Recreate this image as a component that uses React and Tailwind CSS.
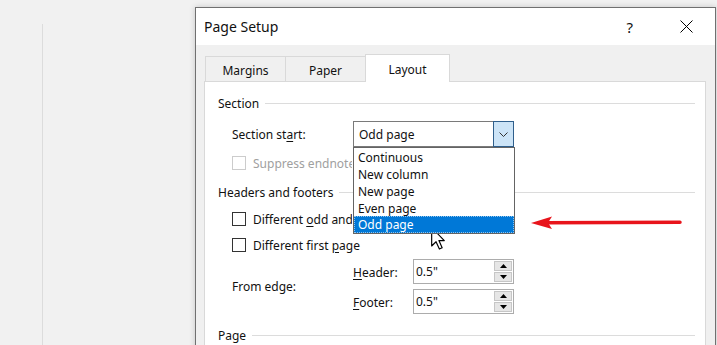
import React from 'react';

const options = ['Continuous', 'New column', 'New page', 'Even page', 'Odd page'];

function Checkbox({ disabled }) {
  return (
    <span
      className={
        disabled
          ? 'w-[14px] h-[14px] shrink-0 border border-[#cccccc] bg-white'
          : 'w-[14px] h-[14px] shrink-0 border border-[#333333] bg-white'
      }
    />
  );
}

function GroupTitle({ label }) {
  return (
    <div className="flex items-center h-[16px] pl-[13px] pr-[10px]">
      <span className="pt-[2px]">{label}</span>
      <div className="flex-1 h-px bg-[#dcdcdc] ml-[6px]" />
    </div>
  );
}

function SpinBox({ value }) {
  return (
    <div className="w-[101px] h-[25px] border border-[#acacac] bg-white flex">
      <span className="flex-1 flex items-center pl-[2px] pt-[1px]">{value}</span>
      <div className="w-[19px] flex flex-col py-px pr-px gap-px">
        <div className="flex-1 bg-[#e6e6e6] border border-[#c6c6c6] flex items-center justify-center">
          <svg width="7" height="4" viewBox="0 0 7 4">
            <polygon points="3.5,0 7,4 0,4" fill="#000" />
          </svg>
        </div>
        <div className="flex-1 bg-[#e6e6e6] border border-[#c6c6c6] flex items-center justify-center">
          <svg width="7" height="4" viewBox="0 0 7 4">
            <polygon points="0,0 7,0 3.5,4" fill="#000" />
          </svg>
        </div>
      </div>
    </div>
  );
}

function Tab({ label, active }) {
  if (active) {
    return (
      <div className="relative z-10 -ml-px -mb-px w-[85px] h-[28px] bg-white border border-b-0 border-[#d9d9d9] flex justify-center pt-[7px]">
        {label}
      </div>
    );
  }
  return (
    <div className="-ml-px first:ml-0 w-[81px] h-[25px] bg-[#f0f0f0] border border-b-0 border-[#d9d9d9] flex justify-center pt-[6px]">
      {label}
    </div>
  );
}

export default function App() {
  return (
    <div className="relative w-[717px] h-[345px] overflow-hidden bg-[#f1f1f1] flex items-start font-['Noto_Sans',sans-serif] text-[12px] leading-[16px] text-[#111]">
      <div className="ml-[42px] mt-[24px] w-px h-[321px] bg-[#dcdcdc]" />

      <div className="ml-[152px] mt-[7px] w-[521px] h-[400px] shrink-0 border border-[#707070] bg-[#f0f0f0] shadow-[0_0_6px_rgba(0,0,0,0.18)]">
        {/* title bar */}
        <div className="h-[37px] bg-white flex items-center">
          <span className="pl-[8px] text-[14px] flex-1">Page Setup</span>
          <span className="text-[15px]">?</span>
          <svg className="ml-[47px] mr-[22px]" width="13" height="13" viewBox="0 0 13 13">
            <path d="M0.5 0.5 L12.5 12.5 M12.5 0.5 L0.5 12.5" stroke="#000" strokeWidth="1" />
          </svg>
        </div>

        <div className="pl-[8px] pr-[9px] pt-[9px]">
          {/* tabs */}
          <div className="flex items-end pl-[1px] h-[27px]">
            <Tab label="Margins" />
            <Tab label="Paper" />
            <Tab label="Layout" active />
          </div>

          {/* panel */}
          <div className="h-[300px] bg-white border border-[#d9d9d9] pt-[13px]">
            <GroupTitle label="Section" />

            <div className="mt-[10px] pl-[27px] flex items-center h-[26px]">
              <span className="w-[121px] pt-[2px]">
                Section st<u className="underline-offset-2">a</u>rt:
              </span>
              <div className="relative w-[161px] h-[26px] border border-[#7a7a7a] bg-white flex">
                <span className="flex-1 flex items-center pl-[5px] pt-[2px]">Odd page</span>
                <div className="w-[21px] -my-px -mr-px bg-[#cce4f7] border border-[#2f5f8c] flex items-center justify-center">
                  <svg width="9" height="5" viewBox="0 0 9 5">
                    <path d="M0.5 0.5 L4.5 4.5 L8.5 0.5" fill="none" stroke="#333" strokeWidth="1" />
                  </svg>
                </div>
                <div className="absolute left-[-1px] top-[25px] w-[162px] bg-white border border-[#646464] z-20 flex flex-col">
                  {options.map((o) =>
                    o === 'Odd page' ? (
                      <div
                        key={o}
                        className="h-[17px] bg-[#0078d7] text-white pl-[3px] pt-[1px] border border-dotted border-[#8fc3ec] flex items-center"
                      >
                        {o}
                      </div>
                    ) : (
                      <div key={o} className="h-[17px] pl-[4px] pt-[2px] flex items-center">
                        {o}
                      </div>
                    )
                  )}
                </div>
              </div>
            </div>

            <div className="mt-[8px] pl-[27px] flex items-center h-[16px] gap-[7px] text-[#a0a0a0]">
              <Checkbox disabled />
              <span className="w-[99px] overflow-hidden whitespace-nowrap pt-[2px]">Suppress endnotes</span>
            </div>

            <div className="mt-[13px]">
              <GroupTitle label="Headers and footers" />
            </div>

            <div className="mt-[11px] pl-[27px] flex items-center h-[16px] gap-[7px]">
              <Checkbox />
              <span className="w-[99px] overflow-hidden whitespace-nowrap pt-[2px]">
                Different <u className="underline-offset-2">o</u>dd and even
              </span>
            </div>

            <div className="mt-[10px] pl-[27px] flex items-center h-[16px] gap-[7px]">
              <Checkbox />
              <span className="pt-[2px]">
                Different first <u className="underline-offset-2">p</u>age
              </span>
            </div>

            <div className="mt-[6px] pl-[27px] flex items-center">
              <span className="w-[121px]">From edge:</span>
              <div className="flex flex-col gap-[5px]">
                <div className="flex items-center">
                  <span className="w-[60px] pt-[2px]">
                    <u className="underline-offset-2">H</u>eader:
                  </span>
                  <SpinBox value={'0.5"'} />
                </div>
                <div className="flex items-center">
                  <span className="w-[60px] pt-[2px]">
                    <u className="underline-offset-2">F</u>ooter:
                  </span>
                  <SpinBox value={'0.5"'} />
                </div>
              </div>
            </div>

            <div className="mt-[13px]">
              <GroupTitle label="Page" />
            </div>
          </div>
        </div>
      </div>

      {/* red arrow annotation */}
      <svg className="absolute left-0 top-0 pointer-events-none" width="717" height="345" viewBox="0 0 717 345">
        <line x1="546" y1="222.8" x2="680" y2="222.2" stroke="#e8141b" strokeWidth="3.5" strokeLinecap="round" />
        <polygon points="531,223 552,216.5 548,222.8 552,229" fill="#e8141b" />
      </svg>

      {/* mouse cursor */}
      <svg className="absolute left-[431px] top-[227px] pointer-events-none" width="14" height="23" viewBox="0 0 12 20">
        <path
          d="M0.5 0.5 L0.5 16.5 L4.3 12.8 L7.2 19.2 L9.6 18.1 L6.8 11.8 L11.5 11.8 Z"
          fill="#fff"
          stroke="#000"
          strokeWidth="1"
          strokeLinejoin="round"
        />
      </svg>
    </div>
  );
}
